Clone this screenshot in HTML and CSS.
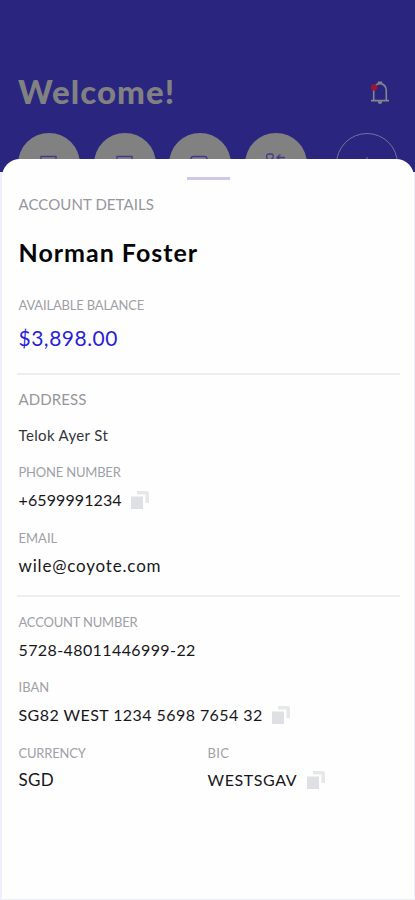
FILE: index.html
```
<!DOCTYPE html>
<html lang="en">
<head>
<meta charset="utf-8">
<title>Account details</title>
<link rel="stylesheet" href="styles.css">
</head>
<body>
<svg width="0" height="0" class="defs" aria-hidden="true">
  <symbol id="copy" viewBox="0 0 18 18">
    <path d="M0 5.5h12V18H0z" fill="#dfe0e3"/>
    <path d="M6 0h9.500Q18 0 18 2.500V12h-3.600V3.600H6z" fill="#e6e7e9"/>
  </symbol>
</svg>
<div class="screen">
  <header class="header">
    <div class="topline">
      <h1>Welcome!</h1>
      <svg class="bell" viewBox="0 0 20 26" fill="none" stroke="#85858c" stroke-width="1.6">
        <path d="M1 20.600h18M3.700 20.600V10.500C3.700 7 6 4.200 10 3.400c4 .8 6.300 3.600 6.300 7.100v10.100M8.600 3.600V2.400h2.800v1.200"/>
        <path d="M8 21.200h4v1.400q0 1.400-2 1.400t-2-1.400z" fill="#85858c" stroke="none"/>
        <circle cx="4.200" cy="7.400" r="3.100" fill="#a3142c" stroke="none"/>
      </svg>
    </div>
    <div class="actions">
      <div class="circle"><svg viewBox="0 0 62 62"><path d="M23 30v-6.500h15V30"/></svg></div>
      <div class="circle"><svg viewBox="0 0 62 62"><path d="M23 30v-6.500h15V30"/></svg></div>
      <div class="circle"><svg viewBox="0 0 62 62"><path d="M22 30v-4q0-2.500 2.500-2.500h11q2.500 0 2.500 2.500v4"/></svg></div>
      <div class="circle"><svg viewBox="0 0 62 62"><path d="M22.500 26.500q-2.500-5.500 1.500-5.500h2q3 0 2 4l-2 1M32 24.500h8M35.500 21.500l-3.500 3 3.500 3"/></svg></div>
      <div class="circle ring"><svg viewBox="0 0 62 62"><path d="M31 24v14M24 31h14"/></svg></div>
    </div>
  </header>
  <main class="sheet">
    <div class="handle"></div>
    <section class="summary">
      <p class="heading details">ACCOUNT DETAILS</p>
      <h2>Norman Foster</h2>
      <p class="label available">AVAILABLE BALANCE</p>
      <p class="balance">$3,898.00</p>
    </section>
    <section class="contact">
      <p class="heading">ADDRESS</p>
      <p class="street">Telok Ayer St</p>
      <p class="label phone-label">PHONE NUMBER</p>
      <p class="value phone">+6599991234<svg class="copy"><use href="#copy"/></svg></p>
      <p class="label plain">EMAIL</p>
      <p class="value email">wile@coyote.com</p>
    </section>
    <section class="bank">
      <p class="label number-label">ACCOUNT NUMBER</p>
      <p class="value">5728-48011446999-22</p>
      <p class="label plain">IBAN</p>
      <p class="value iban">SG82 WEST 1234 5698 7654 32<svg class="copy"><use href="#copy"/></svg></p>
      <div class="columns">
        <div>
          <p class="label">CURRENCY</p>
          <p class="value code">SGD</p>
        </div>
        <div>
          <p class="label bic-label">BIC</p>
          <p class="value bic">WESTSGAV<svg class="copy"><use href="#copy"/></svg></p>
        </div>
      </div>
    </section>
  </main>
</div>
</body>
</html>
```
FILE: styles.css
```
* { box-sizing: border-box; margin: 0; }
body { background: #efeeff; font-family: Lato, sans-serif; color: #17171b; }
.defs { display: block; }
.screen { height: 900px; display: flex; flex-direction: column; overflow: hidden; }
.header { height: 172px; flex: none; background: #2a2680; padding: 71px 17px 0 18px; }
.topline { display: flex; justify-content: space-between; height: 40px; padding-right: 8px; }
h1 { font-size: 33px; line-height: 40px; font-weight: 900; letter-spacing: 1.1px; color: #818181; }
.bell { width: 20px; height: 26px; margin-top: 9px; }
.actions { display: flex; gap: 13.5px; margin-top: 22px; height: 39px; overflow: hidden; }
.circle { flex: none; width: 62px; height: 62px; border-radius: 50%; background: #818181; }
.circle svg { display: block; fill: none; stroke: #40398c; stroke-width: 1.3; }
.ring { margin-left: 16px; background: none; border: 1.5px solid #73729b; }
.ring svg { stroke: #73729b; }
.sheet { display: flow-root; flex: 1; position: relative; margin: -13px 1.5px 1px 2px; padding: 0 14px 0 15px; background: #fefefe; border-radius: 18px 18px 0 0; }
.handle { width: 43px; height: 3px; margin: 18px 0 14px 170px; background: #cdc8ea; }
section { padding-left: 1.5px; }
.heading { font-size: 15px; line-height: 20px; letter-spacing: .08px; color: #96969d; }
h2 { margin-top: 23px; font-size: 25px; line-height: 30px; font-weight: 700; letter-spacing: 1px; color: #050507; }
.label { font-size: 13px; line-height: 20px; letter-spacing: -.2px; color: #a0a0a7; }
.available { margin-top: 28px; letter-spacing: -.18px; }
.balance { margin-top: 10px; font-size: 21px; line-height: 26px; letter-spacing: .5px; color: #2a1edb; }
.contact, .bank { border-top: 2px solid #eeeef0; }
.contact { margin-top: 22px; padding-top: 14px; }
.street { margin-top: 16px; font-size: 15px; line-height: 20px; letter-spacing: .35px; color: #34343a; }
.phone-label { margin-top: 17px; }
.value { display: flex; align-items: center; height: 20px; margin-top: 8px; font-size: 16px; line-height: 20px; letter-spacing: .4px; white-space: nowrap; }
.phone { letter-spacing: .1px; }
.copy { width: 18px; height: 18px; margin-left: 9px; }
.plain { margin-top: 18px; letter-spacing: 0; }
.email { margin-top: 8px; font-size: 17px; letter-spacing: .82px; }
.bank { margin-top: 19px; padding-top: 15px; }
.number-label { letter-spacing: -.2px; }
.bank .plain { margin-top: 17px; }
.iban { letter-spacing: .43px; }
.columns { display: grid; grid-template-columns: 189px 1fr; margin-top: 18px; }
.columns .value { margin-top: 7px; }
.code { font-size: 17px; letter-spacing: .3px; }
.bic-label { letter-spacing: .3px; }
.columns .bic { letter-spacing: .6px; }
.bic .copy { margin-left: 10px; }
```
